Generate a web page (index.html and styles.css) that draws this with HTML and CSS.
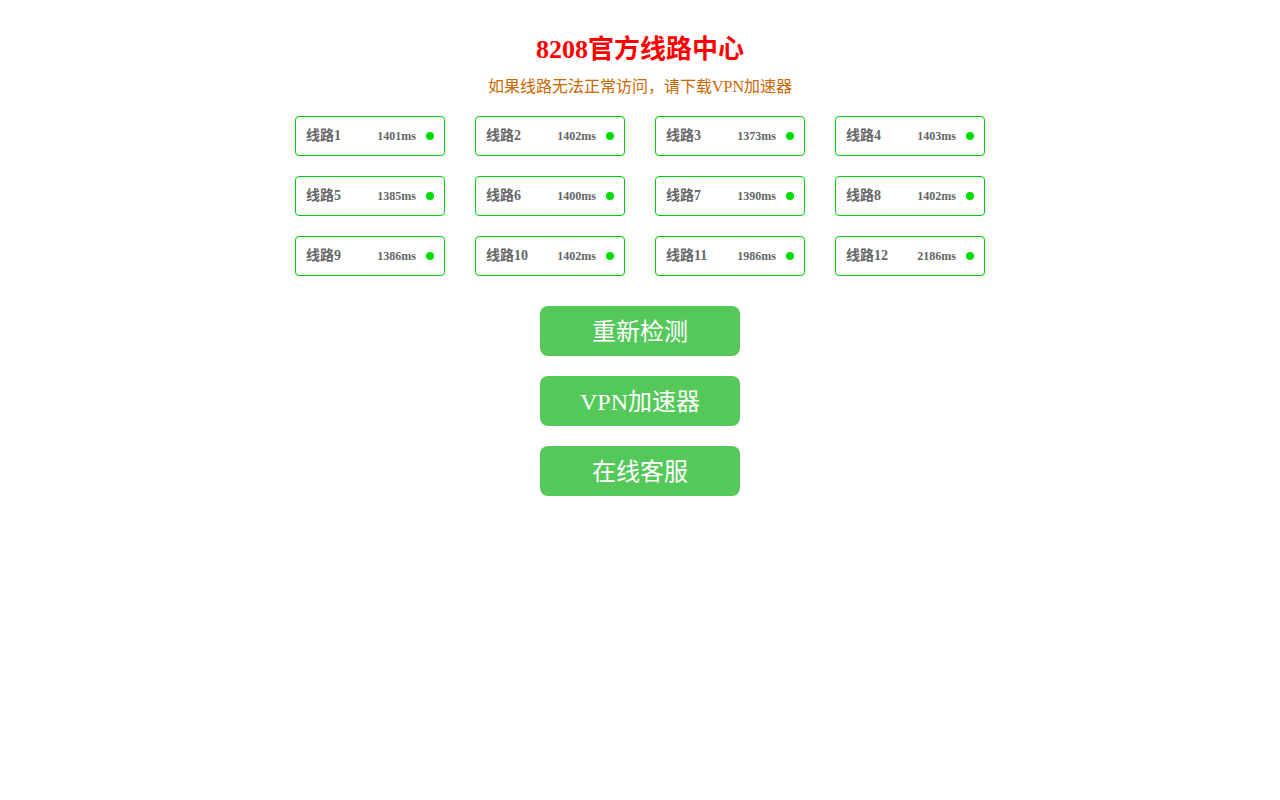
FILE: index.html
```html
<!DOCTYPE html>
<html lang="zh-CN">
<head>
<meta charset="utf-8">
<title>8208官方线路中心</title>
<link rel="stylesheet" href="styles.css">
</head>
<body>
<div class="page">
  <h1 class="title">8208官方线路中心</h1>
  <p class="subtitle">如果线路无法正常访问，请下载VPN加速器</p>
  <div class="grid">
    <div class="card"><span class="name">线路1</span><span class="ms">1401ms</span><span class="dot"></span></div>
    <div class="card"><span class="name">线路2</span><span class="ms">1402ms</span><span class="dot"></span></div>
    <div class="card"><span class="name">线路3</span><span class="ms">1373ms</span><span class="dot"></span></div>
    <div class="card"><span class="name">线路4</span><span class="ms">1403ms</span><span class="dot"></span></div>
    <div class="card"><span class="name">线路5</span><span class="ms">1385ms</span><span class="dot"></span></div>
    <div class="card"><span class="name">线路6</span><span class="ms">1400ms</span><span class="dot"></span></div>
    <div class="card"><span class="name">线路7</span><span class="ms">1390ms</span><span class="dot"></span></div>
    <div class="card"><span class="name">线路8</span><span class="ms">1402ms</span><span class="dot"></span></div>
    <div class="card"><span class="name">线路9</span><span class="ms">1386ms</span><span class="dot"></span></div>
    <div class="card"><span class="name">线路10</span><span class="ms">1402ms</span><span class="dot"></span></div>
    <div class="card"><span class="name">线路11</span><span class="ms">1986ms</span><span class="dot"></span></div>
    <div class="card"><span class="name">线路12</span><span class="ms">2186ms</span><span class="dot"></span></div>
  </div>
  <div class="buttons">
    <a class="btn">重新检测</a>
    <a class="btn">VPN加速器</a>
    <a class="btn">在线客服</a>
  </div>
</div>
</body>
</html>
```

FILE: styles.css
```css
html, body {
  margin: 0;
  padding: 0;
  background: #fff;
}
body {
  font-family: "Liberation Serif", "Noto Sans CJK SC", serif;
}
.page {
  display: flex;
  flex-direction: column;
  align-items: center;
  padding-top: 34px;
}
.title {
  margin: 0;
  font-size: 26px;
  line-height: 32px;
  font-weight: bold;
  color: #ff0000;
}
.subtitle {
  margin: 11px 0 0;
  font-size: 16px;
  line-height: 20px;
  color: #cc6600;
}
.grid {
  margin-top: 19px;
  display: grid;
  grid-template-columns: repeat(4, 150px);
  column-gap: 30px;
  row-gap: 20px;
}
.card {
  box-sizing: border-box;
  height: 40px;
  border: 1px solid #00cc00;
  border-radius: 4px;
  display: flex;
  align-items: center;
  padding: 0 10px;
}
.name {
  font-size: 14px;
  line-height: 16px;
  font-weight: bold;
  color: #666;
  flex: 1;
  margin-top: -1px;
}
.ms {
  font-size: 12px;
  font-weight: bold;
  color: #666;
  margin-right: 10px;
}
.dot {
  width: 8px;
  height: 8px;
  border-radius: 50%;
  background: #00dd00;
}
.buttons {
  margin-top: 30px;
  display: flex;
  flex-direction: column;
  gap: 20px;
}
.btn {
  box-sizing: border-box;
  display: flex;
  align-items: center;
  justify-content: center;
  width: 200px;
  height: 50px;
  padding-bottom: 4px;
  border-radius: 8px;
  background: #54c95a;
  color: #fff;
  font-size: 24px;
}
```
